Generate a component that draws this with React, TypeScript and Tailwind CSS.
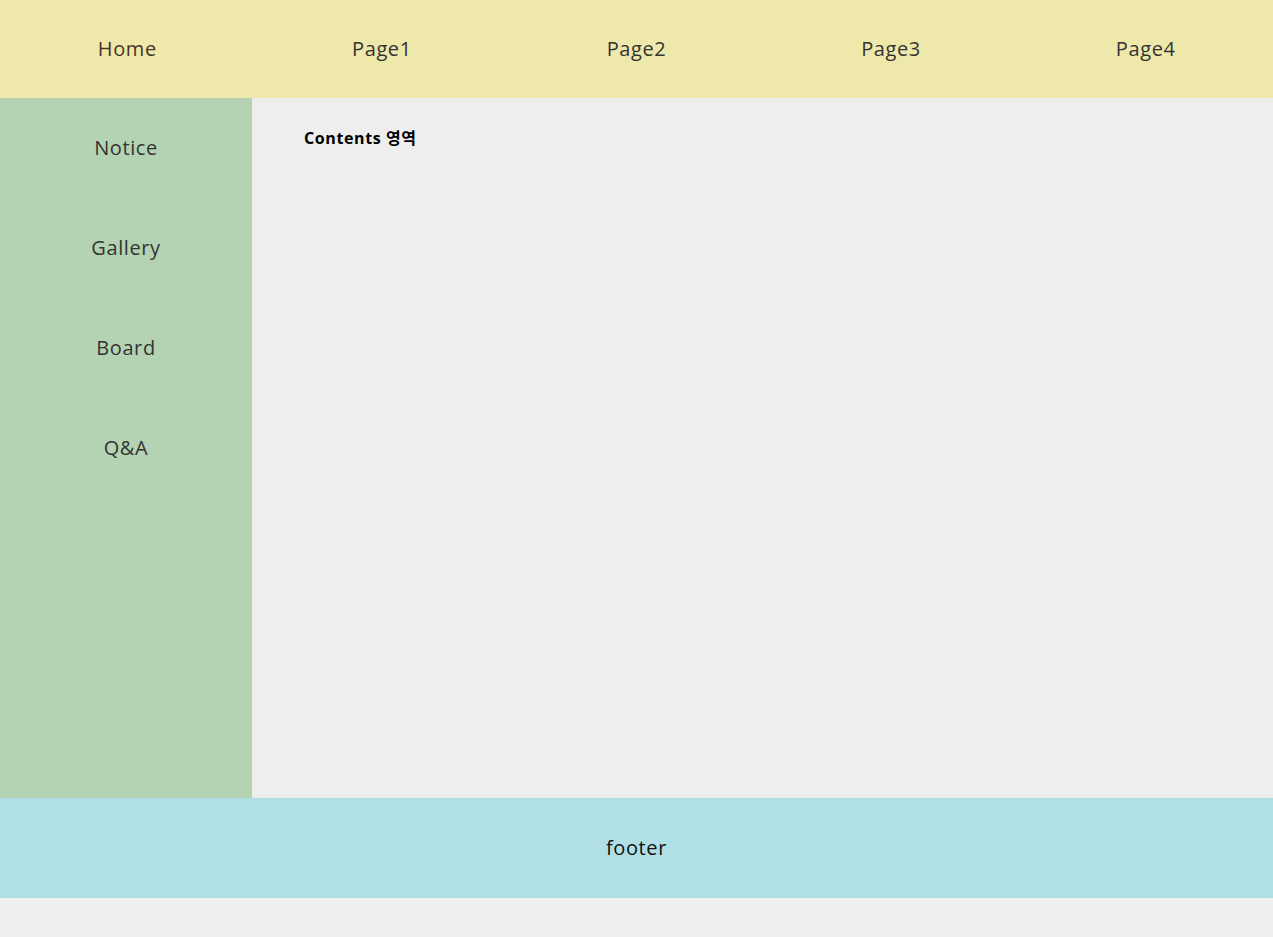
import React from 'react';

const topMenu = ['Home', 'Page1', 'Page2', 'Page3', 'Page4'];
const sideMenu = ['Notice', 'Gallery', 'Board', 'Q&A'];

const App: React.FC = () => {
  return (
    <div className="min-h-[937px] bg-[#efefef] font-['Open_Sans','Noto_Sans_CJK_KR',sans-serif]">
      <header className="h-[98px] bg-[#eee8aa] flex">
        {topMenu.map((item, i) => (
          <div
            key={item}
            className={`flex-1 flex items-center justify-center text-[20px] tracking-[0.6px] ${
              i === 0 ? 'text-[#4a3424]' : 'text-[#333]'
            }`}
          >
            {item}
          </div>
        ))}
      </header>

      <div className="flex h-[700px]">
        <aside className="w-[252px] bg-[#b4d3b2]">
          {sideMenu.map(item => (
            <div key={item} className="h-[100px] flex items-center justify-center text-[20px] tracking-[0.6px] text-[#333]">
              {item}
            </div>
          ))}
        </aside>
        <main className="flex-1 bg-[#eeeeee] pl-[52px] pt-[28px]">
          <p className="text-[16px] font-bold tracking-[0.6px] text-black">Contents 영역</p>
        </main>
      </div>

      <footer className="h-[100px] bg-[#b0e0e6] flex items-center justify-center text-[20px] tracking-[0.6px] text-[#111]">
        footer
      </footer>
    </div>
  );
};

export default App;
